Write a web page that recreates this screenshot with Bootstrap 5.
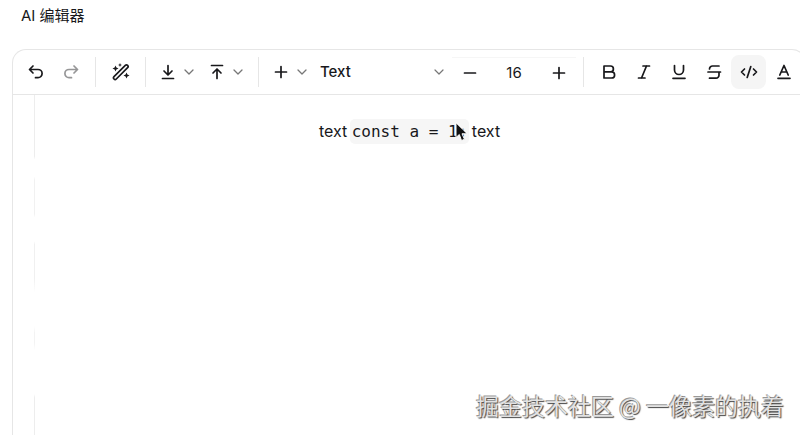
<!DOCTYPE html>
<html lang="zh-CN">
<head>
<meta charset="utf-8">
<meta name="viewport" content="width=device-width, initial-scale=1">
<title>AI 编辑器</title>
<link href="https://cdn.jsdelivr.net/npm/bootstrap@5.3.0/dist/css/bootstrap.min.css" rel="stylesheet">
<style>
body{font-family:Inter,"Noto Sans CJK SC",sans-serif;color:#18181b;background:#fff}
.page-title{font-size:15px;line-height:20px;font-weight:400;padding:6px 21px 23px}
.editor{margin:0 -6px 0 12px;border:1px solid #e6e6e6;border-bottom:0;border-radius:14px 14px 0 0}
.toolbar{padding:5px;height:45px;border-bottom:1px solid #e6e6e6}
.tool{width:35px;height:34px;padding:0;border:0;border-radius:8px;color:#18181b;display:flex;align-items:center;justify-content:center;flex:none}
.tool.split{width:49px;gap:9px}
.tool.active{background:#f5f5f5}
.tool:disabled{color:#18181b;opacity:.45;border:0}
.tool svg,.pointer svg{fill:none;stroke:currentColor;stroke-width:1.7;stroke-linecap:round;stroke-linejoin:round;display:block}
.tool .chev{stroke:#777;stroke-width:1.3}
.rule{width:1px;height:30px;margin:0 7px;background:#e6e6e6;flex:none}
.style-select{width:137px;height:34px;flex:none;border:0;padding:0 28px 0 5px;font-size:15px;font-weight:500;color:#18181b;background-color:transparent;background-size:10px 6px;background-position:right 8px center;background-image:url("data:image/svg+xml,%3Csvg xmlns='http://www.w3.org/2000/svg' viewBox='0 0 10 6'%3E%3Cpath d='M1 1l4 4 4-4' fill='none' stroke='%23777' stroke-width='1.2' stroke-linecap='round' stroke-linejoin='round'/%3E%3C/svg%3E")}
.sizer{border-top:1px solid #f6f6f6;height:30px}
.size-input{width:54px;height:28px;flex:none;border:0;padding:0;border-radius:0;font-size:15px;text-align:center;color:#18181b;background:transparent}
.doc{min-height:340px;padding-right:21px}
.gutter{width:22px;flex:none;background:linear-gradient(#ededed 0 18%,#fff 19% 24%,#f1f1f1 25% 35%,#fff 36% 43%,#f0f0f0 44% 54%,#fff 58% 68%,#f3f3f3 70% 73%,#fff 75% 88%,#ededed 89%) right/1px 100% no-repeat}
.doc p{padding-top:23px;font-size:16px;line-height:26px}
.doc code{font-family:"DejaVu Sans Mono",monospace;font-size:16px;color:#18181b;background:#f6f6f6;border-radius:5px;padding:3px 2px;margin:0 -2px}
.pointer{left:100%;top:3px;margin-left:-14px}
.watermark{right:16px;bottom:13px;font-family:"Noto Sans CJK SC",sans-serif;font-size:23px;line-height:34px;color:#e2e2e2;text-shadow:1px 1px 1px #444,-1px -1px 0 #999}
</style>
<script src="https://cdn.jsdelivr.net/npm/bootstrap@5.3.0/dist/js/bootstrap.bundle.min.js"></script>
</head>
<body>
<div class="min-vh-100 overflow-hidden position-relative">
<h1 class="page-title m-0">AI 编辑器</h1>
<main class="editor">
<div class="toolbar d-flex align-items-center" role="toolbar" aria-label="格式">
<button class="btn tool" aria-label="撤销"><svg width="18" height="18" viewBox="0 0 18 18"><path d="M6 3L2.500 6.500 6 10M3 6.500h8a4 4 0 0 1 0 8.200H8.500"/></svg></button>
<button class="btn tool" aria-label="重做" disabled><svg width="18" height="18" viewBox="0 0 18 18"><path d="M12 3l3.500 3.500L12 10M15 6.500H7a4 4 0 0 0 0 8.200h2.500"/></svg></button>
<span class="rule"></span>
<button class="btn tool" aria-label="AI"><svg width="18" height="18" viewBox="0 0 18 18"><path d="M2 13.700L13.300 2.400a1.600 1.600 0 0 1 2.300 2.300L4.300 16a1.600 1.600 0 0 1-2.300-2.300z"/><path fill="currentColor" stroke="none" d="M3.500 2.500l.9 2.100 2.100.9-2.100.9-.9 2.100-.9-2.100L.5 5.500l2.100-.9zM8 0l.6 1.400 1.400.6-1.400.6L8 4l-.6-1.400L6 2l1.400-.6zM14.500 9.500l.9 2.100 2.100.9-2.100.9-.9 2.100-.9-2.100-2.100-.9 2.100-.9z"/></svg></button>
<span class="rule"></span>
<button class="btn tool split" aria-label="导入"><svg width="14" height="16" viewBox="0 0 14 16"><path d="M7 1.500v9M3 7l4 4 4-4M1.500 14.500h11"/></svg><svg class="chev" width="10" height="6" viewBox="0 0 10 6"><path d="M1 1l4 4 4-4"/></svg></button>
<button class="btn tool split" aria-label="导出"><svg width="14" height="16" viewBox="0 0 14 16"><path d="M7 14.500v-9M3 9l4-4 4 4M1.500 1.500h11"/></svg><svg class="chev" width="10" height="6" viewBox="0 0 10 6"><path d="M1 1l4 4 4-4"/></svg></button>
<span class="rule"></span>
<button class="btn tool split" aria-label="插入"><svg width="14" height="16" viewBox="0 0 14 16"><path d="M7 2.500v11M1.500 8h11"/></svg><svg class="chev" width="10" height="6" viewBox="0 0 10 6"><path d="M1 1l4 4 4-4"/></svg></button>
<select class="form-select style-select" aria-label="段落样式"><option>Text</option></select>
<div class="sizer d-flex align-items-center">
<button class="btn tool" aria-label="减小字号"><svg width="14" height="16" viewBox="0 0 14 16"><path d="M1.500 8h11"/></svg></button>
<input class="form-control size-input" aria-label="字号" value="16">
<button class="btn tool" aria-label="增大字号"><svg width="14" height="16" viewBox="0 0 14 16"><path d="M7 2.500v11M1.500 8h11"/></svg></button>
</div>
<span class="rule"></span>
<button class="btn tool" aria-label="粗体"><svg width="18" height="18" viewBox="0 0 18 18"><path d="M4 3h6.500a2.900 2.900 0 0 1 0 5.800H4zM4 8.800h7.500a3.100 3.100 0 0 1 0 6.200H4z"/></svg></button>
<button class="btn tool" aria-label="斜体"><svg width="18" height="18" viewBox="0 0 18 18"><path d="M8 3h6.500M3.500 15H10M11.500 3l-5 12"/></svg></button>
<button class="btn tool" aria-label="下划线"><svg width="18" height="18" viewBox="0 0 18 18"><path d="M4.500 2.500V7a4.500 4.500 0 0 0 9 0V2.500M3 15.300h12"/></svg></button>
<button class="btn tool" aria-label="删除线"><svg width="18" height="18" viewBox="0 0 18 18"><path d="M14 3H7.500a3 3 0 0 0-3 3M3 9h12.500M4.500 15.200H11a3 3 0 0 0 3-3.200V9"/></svg></button>
<button class="btn tool active" aria-label="代码" aria-pressed="true"><svg width="18" height="18" viewBox="0 0 18 18"><path d="M4.500 6L1.500 9l3 3M13.500 6l3 3-3 3M10.800 3.500l-3.600 11"/></svg></button>
<button class="btn tool" aria-label="文字颜色"><svg width="18" height="18" viewBox="0 0 18 18"><path d="M4.800 12L9 2.500 13.200 12M6.300 9h5.400M3 15.300h12"/></svg></button>
</div>
<div class="doc d-flex">
<div class="gutter"></div>
<p class="flex-grow-1 text-center m-0" contenteditable="true">text <code class="position-relative">const a = 1;<span class="pointer position-absolute"><svg width="14" height="20" viewBox="0 0 14 20"><path fill="#111" stroke="#fff" stroke-width="1" d="M1 1v14.500l3.300-3L6.500 18.500l3-1.200L7 11.800h5z"/></svg></span></code> text</p>
</div>
</main>
<div class="watermark position-absolute">掘金技术社区 @ 一像素的执着</div>
</div>
</body>
</html>
